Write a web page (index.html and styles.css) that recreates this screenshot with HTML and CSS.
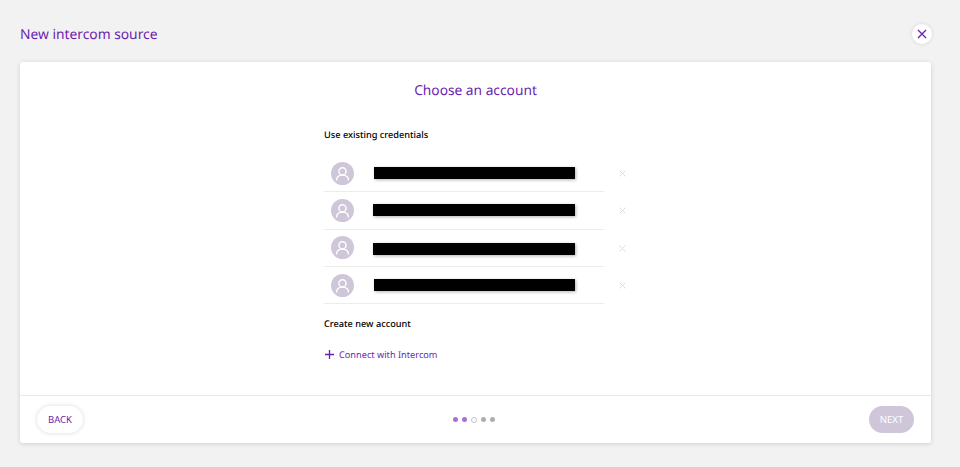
FILE: index.html
```html
<!DOCTYPE html>
<html lang="en">
<head>
  <meta charset="UTF-8">
  <title>New intercom source</title>
  <link rel="stylesheet" href="styles.css">
</head>
<body>
  <header class="top">
    <h1 class="page-title">New intercom source</h1>
    <button class="close" type="button" aria-label="Close">
      <svg width="10" height="10" viewBox="0 0 10 10"><path d="M1 1l8 8M9 1l-8 8" stroke="#6a1fb0" stroke-width="1.3" fill="none"/></svg>
    </button>
  </header>

  <main class="card">
    <div class="card-body">
      <h2 class="card-title">Choose an account</h2>
      <div class="column">
        <h3 class="section-title">Use existing credentials</h3>
        <ul class="accounts">
          <li class="account">
            <div class="account-main">
              <span class="avatar"><svg width="23" height="23" viewBox="0 0 23 23"><circle cx="11.5" cy="9.3" r="3.6" fill="none" stroke="#fff" stroke-width="1.4"/><path d="M5.5 18.5c0-3.6 2.6-5.4 6-5.4s6 1.8 6 5.4" fill="none" stroke="#fff" stroke-width="1.4"/></svg></span>
              <span class="redacted redacted-a"></span>
            </div>
            <svg class="remove" width="7" height="7" viewBox="0 0 7 7"><path d="M.5.5l6 6M6.500.5l-6 6" stroke="#dedede" stroke-width="1" fill="none"/></svg>
          </li>
          <li class="account">
            <div class="account-main">
              <span class="avatar"><svg width="23" height="23" viewBox="0 0 23 23"><circle cx="11.5" cy="9.3" r="3.6" fill="none" stroke="#fff" stroke-width="1.4"/><path d="M5.5 18.5c0-3.6 2.6-5.4 6-5.4s6 1.8 6 5.4" fill="none" stroke="#fff" stroke-width="1.4"/></svg></span>
              <span class="redacted"></span>
            </div>
            <svg class="remove" width="7" height="7" viewBox="0 0 7 7"><path d="M.5.5l6 6M6.500.5l-6 6" stroke="#dedede" stroke-width="1" fill="none"/></svg>
          </li>
          <li class="account">
            <div class="account-main">
              <span class="avatar"><svg width="23" height="23" viewBox="0 0 23 23"><circle cx="11.5" cy="9.3" r="3.6" fill="none" stroke="#fff" stroke-width="1.4"/><path d="M5.5 18.5c0-3.6 2.6-5.4 6-5.4s6 1.8 6 5.4" fill="none" stroke="#fff" stroke-width="1.4"/></svg></span>
              <span class="redacted redacted-low"></span>
            </div>
            <svg class="remove" width="7" height="7" viewBox="0 0 7 7"><path d="M.5.5l6 6M6.500.5l-6 6" stroke="#dedede" stroke-width="1" fill="none"/></svg>
          </li>
          <li class="account">
            <div class="account-main">
              <span class="avatar"><svg width="23" height="23" viewBox="0 0 23 23"><circle cx="11.5" cy="9.3" r="3.6" fill="none" stroke="#fff" stroke-width="1.4"/><path d="M5.5 18.5c0-3.6 2.6-5.4 6-5.4s6 1.8 6 5.4" fill="none" stroke="#fff" stroke-width="1.4"/></svg></span>
              <span class="redacted redacted-a"></span>
            </div>
            <svg class="remove" width="7" height="7" viewBox="0 0 7 7"><path d="M.5.5l6 6M6.500.5l-6 6" stroke="#dedede" stroke-width="1" fill="none"/></svg>
          </li>
        </ul>
        <h3 class="section-title section-new">Create new account</h3>
        <a class="connect" href="#">
          <svg width="9" height="9" viewBox="0 0 9 9"><path d="M4.500 0v9M0 4.500h9" stroke="#6a1fb0" stroke-width="1.300" fill="none"/></svg>
          Connect with Intercom
        </a>
      </div>
    </div>
    <footer class="card-footer">
      <button class="btn btn-back" type="button">BACK</button>
      <div class="steps">
        <span class="dot dot-done"></span>
        <span class="dot dot-done"></span>
        <span class="dot dot-current"></span>
        <span class="dot"></span>
        <span class="dot"></span>
      </div>
      <button class="btn btn-next" type="button" disabled>NEXT</button>
    </footer>
  </main>
</body>
</html>
```

FILE: styles.css
```css
* {
  box-sizing: border-box;
}

body {
  margin: 0;
  padding: 0 29px 24px 20px;
  height: 467px;
  overflow: hidden;
  background: #f2f2f2;
  font-family: "Noto Sans", "Open Sans", sans-serif;
  text-rendering: geometricPrecision;
}

.top {
  display: flex;
  justify-content: space-between;
  align-items: center;
  height: 62px;
  padding-top: 6px;
}

.page-title {
  margin: 0;
  padding-top: 1px;
  font-size: 13.8px;
  font-weight: 400;
  color: #6a1fb0;
}

.close {
  display: flex;
  align-items: center;
  justify-content: center;
  width: 20px;
  height: 20px;
  margin-right: -1px;
  padding: 0;
  border: 0;
  border-radius: 50%;
  background: #fff;
  box-shadow: 0 0 4px rgba(0, 0, 0, 0.12);
}

.card {
  display: flex;
  flex-direction: column;
  height: 381px;
  background: #fff;
  border-radius: 3px;
  box-shadow: 0 1px 5px rgba(0, 0, 0, 0.14);
}

.card-body {
  flex: 1;
  padding-top: 19px;
}

.card-title {
  margin: 0;
  text-align: center;
  font-size: 13.75px;
  line-height: 20px;
  font-weight: 400;
  color: #6a1fb0;
}

.column {
  width: 303px;
  margin: 0 auto;
  padding-top: 25.5px;
}

.section-title {
  margin: 0;
  font-size: 9.2px;
  line-height: 16px;
  font-weight: 500;
  color: #000;
}

.accounts {
  margin: 12.5px 0 0;
  padding: 0;
  list-style: none;
}

.account {
  display: flex;
  align-items: center;
  height: 37.3px;
}

.account-main {
  display: flex;
  align-items: center;
  width: 280px;
  height: 100%;
  padding-left: 7px;
  border-bottom: 1px solid #ececec;
}

.avatar {
  flex: none;
  width: 23px;
  height: 23px;
  border-radius: 50%;
  background: #cfc6d9;
}

.avatar svg {
  display: block;
}

.redacted {
  width: 202px;
  height: 12px;
  margin-left: 19px;
  background: #000;
  box-shadow: 1px 1px 3px rgba(0, 0, 0, 0.3);
}

.redacted-a {
  width: 201px;
  margin-left: 20px;
}

.redacted-low {
  margin-top: 3px;
}

.remove {
  margin-left: 15px;
}

.section-new {
  margin-top: 11.5px;
}

.connect {
  display: flex;
  align-items: center;
  gap: 5px;
  margin-top: 15px;
  padding-left: 1px;
  font-size: 9.2px;
  line-height: 16px;
  color: #6a1fb0;
  text-decoration: none;
}

.card-footer {
  display: flex;
  align-items: center;
  justify-content: space-between;
  height: 48px;
  padding: 0 17px;
  border-top: 1px solid #e8e8e8;
}

.btn {
  height: 27px;
  padding: 0;
  border: 0;
  border-radius: 14px;
  font-family: inherit;
  font-size: 9.5px;
}

.btn-back {
  width: 46px;
  background: #fff;
  color: #6a1fb0;
  box-shadow: 0 0 4px rgba(0, 0, 0, 0.16);
}

.btn-next {
  width: 45px;
  background: #cfc6d9;
  color: #fff;
}

.steps {
  display: flex;
  gap: 4px;
  margin-right: 5px;
}

.dot {
  width: 5px;
  height: 5px;
  border-radius: 50%;
  background: #b0acb4;
}

.dot-done {
  background: #ab6fd8;
}

.dot-current {
  width: 6px;
  height: 6px;
  background: #fff;
  border: 1px solid #c6c0cc;
}
```
